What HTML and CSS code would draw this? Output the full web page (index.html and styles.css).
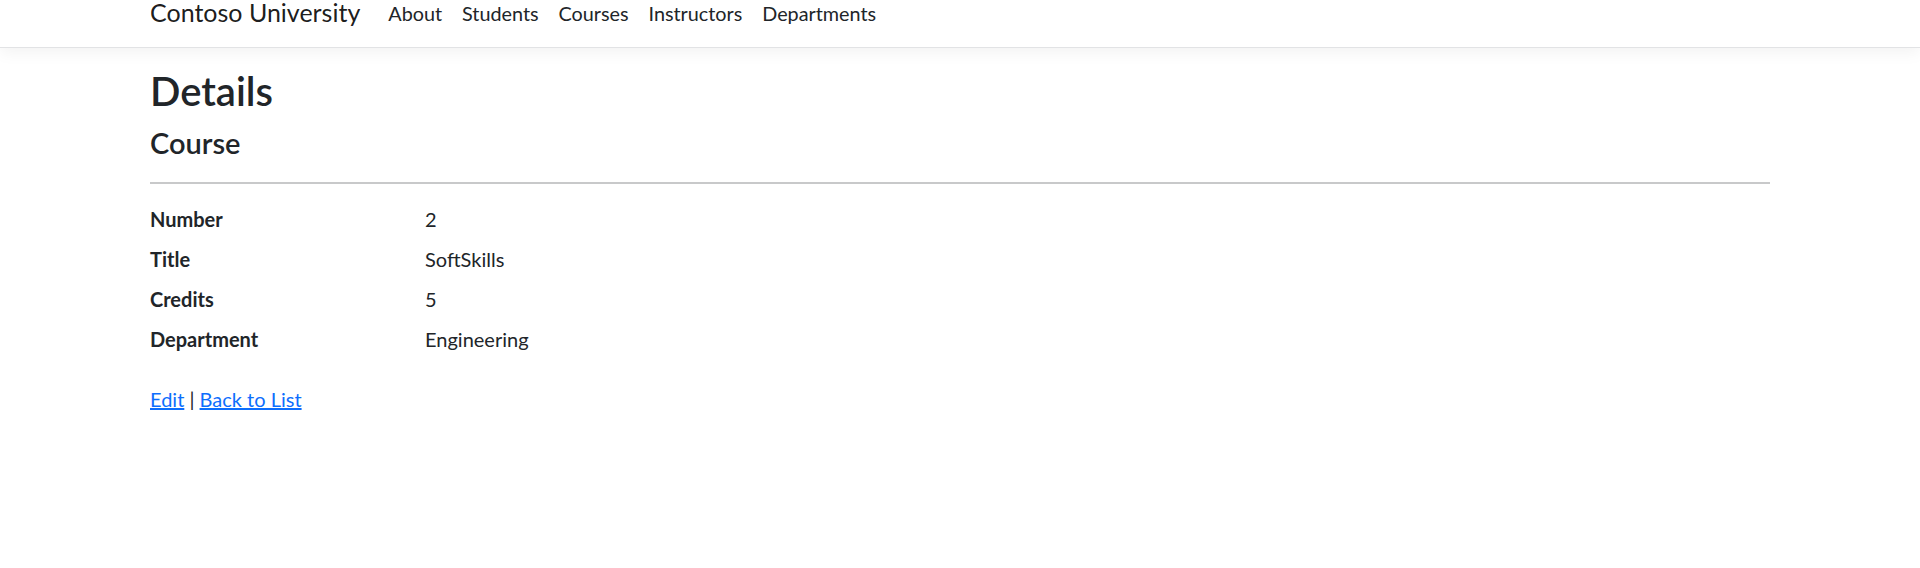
FILE: index.html
```html
<!DOCTYPE html>
<html lang="en">
<head>
<meta charset="utf-8">
<title>Details - Contoso University</title>
<link rel="stylesheet" href="styles.css">
</head>
<body>
<header>
  <nav class="navbar">
    <div class="container navbar-inner">
      <a class="navbar-brand" href="#">Contoso University</a>
      <ul class="nav">
        <li><a class="nav-link" href="#">About</a></li>
        <li><a class="nav-link" href="#">Students</a></li>
        <li><a class="nav-link" href="#">Courses</a></li>
        <li><a class="nav-link" href="#">Instructors</a></li>
        <li><a class="nav-link" href="#">Departments</a></li>
      </ul>
    </div>
  </nav>
</header>
<div class="container">
  <main>
    <h1 class="page-title">Details</h1>
    <div>
      <h4 class="section-title">Course</h4>
      <hr class="divider">
      <dl class="details">
        <dt>Number</dt>
        <dd>2</dd>
        <dt>Title</dt>
        <dd>SoftSkills</dd>
        <dt>Credits</dt>
        <dd>5</dd>
        <dt>Department</dt>
        <dd>Engineering</dd>
      </dl>
    </div>
    <div class="actions">
      <a href="#">Edit</a> | <a href="#">Back to List</a>
    </div>
  </main>
</div>
</body>
</html>
```
FILE: styles.css
```css
* {
  box-sizing: border-box;
}

html, body {
  margin: 0;
  padding: 0;
  background: #fff;
}

body {
  font-family: Lato, "Open Sans", sans-serif;
  font-size: 20px;
  line-height: 1.5;
  color: #212529;
}

.container {
  width: 100%;
  max-width: 1650px;
  margin: 0 auto;
  padding: 0 15px;
}

/* navbar */
.navbar {
  background: #fff;
  border-bottom: 1px solid #e2e3e5;
  box-shadow: 0 5px 15px rgba(0, 0, 0, 0.05);
  padding-bottom: 21px;
  margin-bottom: 20px;
}

.navbar-inner {
  display: flex;
  align-items: center;
  height: 26px;
}

.navbar-brand {
  font-size: 25px;
  line-height: 37.5px;
  color: rgba(0, 0, 0, 0.9);
  text-decoration: none;
  margin-right: 18px;
  white-space: nowrap;
}

.nav {
  display: flex;
  list-style: none;
  margin: 0;
  padding: 0;
}

.nav-link {
  display: block;
  padding: 0 10px;
  font-size: 19.8px;
  line-height: 30px;
  color: #212529;
  text-decoration: none;
}

/* content */
.page-title {
  font-size: 40px;
  font-weight: 600;
  line-height: 46px;
  margin: 1px 0 12px;
}

.section-title {
  font-size: 29px;
  font-weight: 600;
  line-height: 1.2;
  margin: 0;
}

.divider {
  border: 0;
  border-top: 2px solid #c8c9ca;
  height: 0;
  margin: 21px 0 20px;
}

.details {
  display: grid;
  grid-template-columns: 275px 1fr;
  margin: 0 0 20px;
}

.details dt {
  font-weight: 700;
  margin: 0;
}

.details dd {
  margin: 0 0 10px;
}

.actions a {
  color: #0d6efd;
  text-decoration: underline;
}
```
